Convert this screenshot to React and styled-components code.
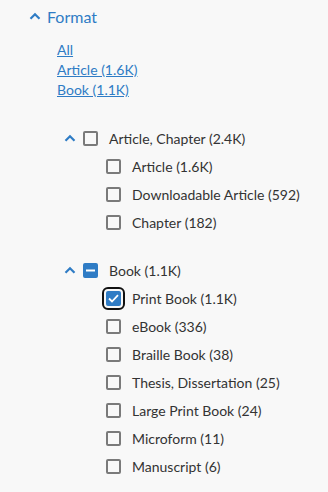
import React from 'react';
import styled, { createGlobalStyle } from 'styled-components';

const GlobalStyle = createGlobalStyle`
  html, body {
    margin: 0;
    padding: 0;
    background: #f8f8f8;
    font-family: Lato, "Open Sans", sans-serif;
  }
`;

const blue = '#2f7cc5';

const Panel = styled.section`
  padding: 5px 0 0 29px;
  width: 328px;
  height: 492px;
  box-sizing: border-box;
`;

const Heading = styled.div`
  display: flex;
  align-items: center;
  gap: 6px;
  color: ${blue};
  font-size: 16px;
  height: 22px;
`;

const Links = styled.div`
  display: flex;
  flex-direction: column;
  margin: 13px 0 0 28px;
`;

const Link = styled.a`
  color: ${blue};
  font-size: 14px;
  line-height: 20px;
  text-decoration: underline;
  width: fit-content;
`;

const Group = styled.div`
  margin: ${p => p.$top}px 0 0 35px;
`;

const Row = styled.div`
  display: flex;
  align-items: center;
  height: 28px;
  color: #333;
  font-size: 14px;
`;

const Toggle = styled.span`
  display: flex;
  width: 13px;
  margin-right: 6px;
`;

const Children = styled.div`
  margin-left: 42px;
`;

const Box = styled.span`
  position: relative;
  box-sizing: border-box;
  width: 15px;
  height: 15px;
  border-radius: 2px;
  border: 2px solid ${p => (p.$on ? blue : '#7a7a7a')};
  background: ${p => (p.$on ? blue : 'transparent')};
  margin-right: 11px;
  display: flex;
  align-items: center;
  justify-content: center;
  flex-shrink: 0;
  outline: ${p => (p.$focus ? '2px solid #111' : 'none')};
  outline-offset: 2px;
`;

const Chevron = ({ size = 12 }) => (
  <svg width={size} height={size * 0.7} viewBox="0 0 12 8" fill="none">
    <path d="M1.5 6.5 L6 2 L10.5 6.5" stroke={blue} strokeWidth="2.2" />
  </svg>
);

const Check = () => (
  <svg width="11" height="9" viewBox="0 0 11 9" fill="none">
    <path d="M1 4.5 L4 7.5 L10 1.2" stroke="#fff" strokeWidth="1.8" />
  </svg>
);

const Minus = () => (
  <svg width="9" height="3" viewBox="0 0 9 3">
    <rect x="0" y="0.5" width="9" height="2" fill="#fff" />
  </svg>
);

const Item = ({ label, on, focus }) => (
  <Row>
    <Box $on={on} $focus={focus}>{on && <Check />}</Box>
    {label}
  </Row>
);

const groups = [
  {
    label: 'Article, Chapter (2.4K)',
    top: 24,
    state: 'off',
    items: [{ label: 'Article (1.6K)' }, { label: 'Downloadable Article (592)' }, { label: 'Chapter (182)' }],
  },
  {
    label: 'Book (1.1K)',
    top: 20,
    state: 'mixed',
    items: [
      { label: 'Print Book (1.1K)', on: true, focus: true },
      { label: 'eBook (336)' },
      { label: 'Braille Book (38)' },
      { label: 'Thesis, Dissertation (25)' },
      { label: 'Large Print Book (24)' },
      { label: 'Microform (11)' },
      { label: 'Manuscript (6)' },
    ],
  },
];

export default function App() {
  return (
    <Panel>
      <GlobalStyle />
      <Heading>
        <Chevron />
        Format
      </Heading>
      <Links>
        <Link href="#">All</Link>
        <Link href="#">Article (1.6K)</Link>
        <Link href="#">Book (1.1K)</Link>
      </Links>
      {groups.map(g => (
        <Group key={g.label} $top={g.top}>
          <Row>
            <Toggle><Chevron /></Toggle>
            <Box $on={g.state === 'mixed'}>{g.state === 'mixed' && <Minus />}</Box>
            {g.label}
          </Row>
          <Children>
            {g.items.map(it => (
              <Item key={it.label} {...it} />
            ))}
          </Children>
        </Group>
      ))}
    </Panel>
  );
}
